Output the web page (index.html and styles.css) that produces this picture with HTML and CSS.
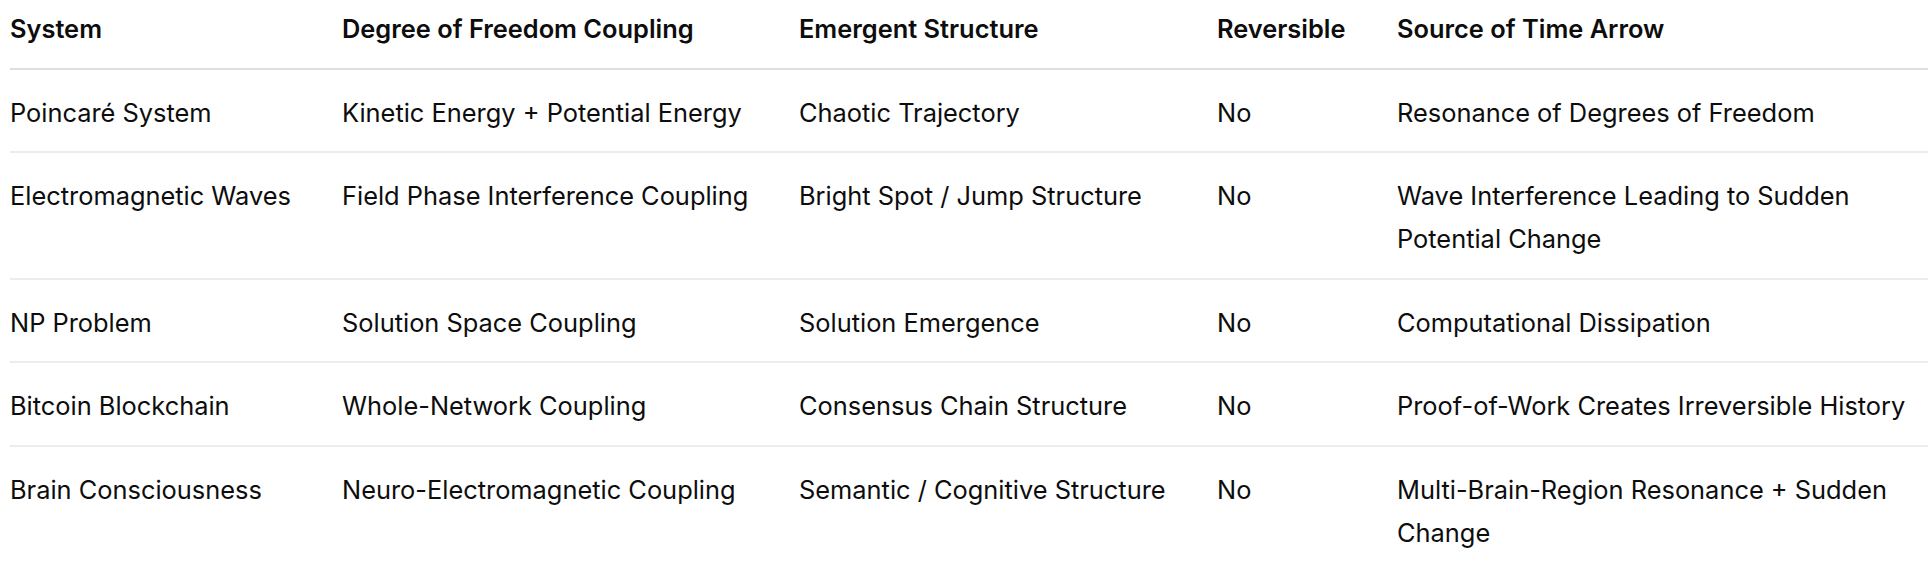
FILE: index.html
```html
<!DOCTYPE html>
<html lang="en">
<head>
<meta charset="utf-8">
<title>Time Arrow Table</title>
<link rel="stylesheet" href="styles.css">
</head>
<body>
<table class="grid">
  <thead>
    <tr>
      <th class="c1">System</th>
      <th class="c2">Degree of Freedom Coupling</th>
      <th class="c3">Emergent Structure</th>
      <th class="c4">Reversible</th>
      <th class="c5">Source of Time Arrow</th>
    </tr>
  </thead>
  <tbody>
    <tr>
      <td>Poincaré System</td>
      <td>Kinetic Energy + Potential Energy</td>
      <td>Chaotic Trajectory</td>
      <td>No</td>
      <td>Resonance of Degrees of Freedom</td>
    </tr>
    <tr>
      <td>Electromagnetic Waves</td>
      <td>Field Phase Interference Coupling</td>
      <td>Bright Spot / Jump Structure</td>
      <td>No</td>
      <td>Wave Interference Leading to Sudden Potential Change</td>
    </tr>
    <tr>
      <td>NP Problem</td>
      <td>Solution Space Coupling</td>
      <td>Solution Emergence</td>
      <td>No</td>
      <td>Computational Dissipation</td>
    </tr>
    <tr>
      <td>Bitcoin Blockchain</td>
      <td>Whole-Network Coupling</td>
      <td>Consensus Chain Structure</td>
      <td>No</td>
      <td>Proof-of-Work Creates Irreversible History</td>
    </tr>
    <tr>
      <td>Brain Consciousness</td>
      <td>Neuro-Electromagnetic Coupling</td>
      <td>Semantic / Cognitive Structure</td>
      <td>No</td>
      <td>Multi-Brain-Region Resonance + Sudden Change</td>
    </tr>
  </tbody>
</table>
</body>
</html>
```

FILE: styles.css
```css
html, body {
  margin: 0;
  padding: 0;
  background: #ffffff;
}

body {
  font-family: Inter, "Noto Sans", "Liberation Sans", sans-serif;
  color: #0d0d0d;
  font-size: 25.4px;
  line-height: 43px;
  overflow: hidden;
}

.grid {
  margin-left: 10px;
  width: 1918px;
  border-collapse: collapse;
  table-layout: fixed;
}

.grid th,
.grid td {
  box-sizing: border-box;
  text-align: left;
  vertical-align: top;
  padding: 21px 12px 17.6px 0;
}

.grid th {
  font-weight: 600;
  padding-top: 6.5px;
  padding-bottom: 18px;
  border-bottom: 2px solid #dedede;
}

.grid td {
  font-weight: 400;
  border-bottom: 2px solid #ececec;
}

.c1 { width: 332px; }
.c2 { width: 457px; }
.c3 { width: 418px; }
.c4 { width: 180px; }
.c5 { width: auto; }
```
